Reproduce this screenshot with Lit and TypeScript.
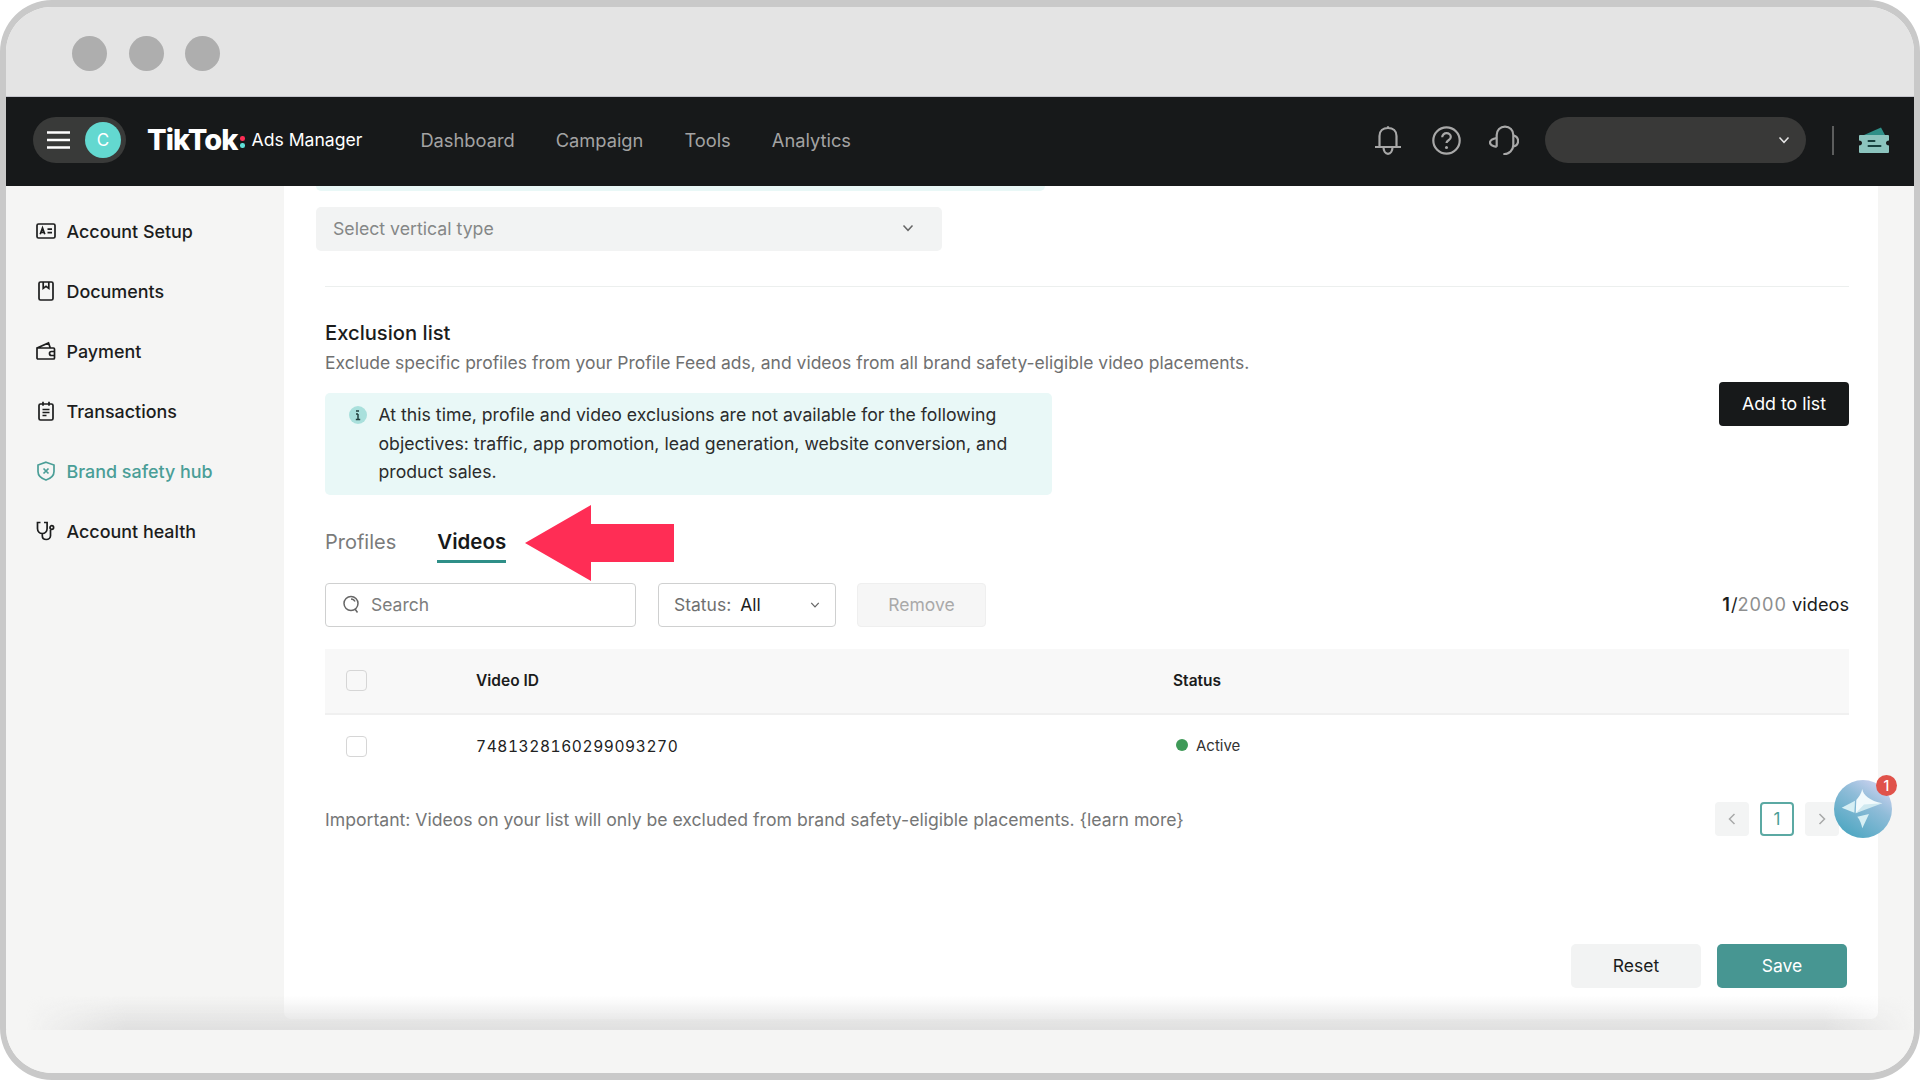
import { LitElement, html, css, svg } from "lit";
import { customElement } from "lit/decorators.js";

const sideItems = [
  { label: "Account Setup", icon: svg`<rect x="1" y="3" width="18" height="14" rx="1.5"/><path d="M4.2 13.2 6.5 7l2.3 6.2M5 11.4h3M11.5 8.2H16M11.5 11.6H16"/>` },
  { label: "Documents", icon: svg`<rect x="3" y="1" width="14" height="18" rx="1.5"/><path d="M7.2 1v6.4l2.8-2 2.8 2V1"/>` },
  { label: "Payment", icon: svg`<path d="M1 7h16.5a1 1 0 0 1 1 1v9a1 1 0 0 1-1 1H2a1 1 0 0 1-1-1V7Zm0 0 11.5-5 1.8 5M18.5 10.5h-3a2 2 0 0 0 0 4h3"/>` },
  { label: "Transactions", icon: svg`<rect x="3" y="3" width="14" height="16" rx="1.5"/><path d="M7 .8v4M13 .8v4M6.5 8.5h7M6.5 11.5h7M6.5 14.5h4"/>` },
  { label: "Brand safety hub", active: true, icon: svg`<path d="M10 1.2 18 4v6.500c0 4-3.400 7-8 8.500-4.600-1.500-8-4.500-8-8.500V4l8-2.800Z"/><path d="m7.500 7.500 5 5M12.500 7.500l-5 5"/>` },
  { label: "Account health", icon: svg`<path d="M4.500 1.500H1.500v6c0 3 2.200 5 4.800 5s4.800-2 4.800-5v-6H8M6.300 12.500v2.200c0 2.200 1.700 3.800 4 3.800s4.200-1.600 4.200-3.800V9"/><circle cx="15.800" cy="6.500" r="1.800"/>` },
];

const navLinks = ["Dashboard", "Campaign", "Tools", "Analytics"];

const chevron = html`<svg class="chev" viewBox="0 0 12 8"><path d="M1.500 1.500 6 6.300l4.500-4.800"/></svg>`;

@customElement("app-root")
export class AppRoot extends LitElement {
  static styles = css`
    :host {
      display: block;
      width: 1920px;
      height: 1080px;
      background: #fff;
      font-family: Inter, "Liberation Sans", sans-serif;
      color: #1b1c1c;
    }
    .frame {
      box-sizing: border-box;
      width: 1920px;
      height: 1080px;
      border: solid #c9c9c9;
      border-width: 7px 6px;
      border-radius: 52px;
      overflow: hidden;
      display: flex;
      flex-direction: column;
      background: #f5f5f4;
    }
    .chrome {
      box-sizing: border-box;
      height: 90px;
      flex: none;
      background: #e4e4e4;
      border-bottom: 1px solid #c5c5cc;
      display: flex;
      align-items: center;
      gap: 21.5px;
      padding: 5px 0 1px 66px;
    }
    .dot {
      width: 35px;
      height: 35px;
      border-radius: 50%;
      background: #aeaeae;
    }
    nav {
      box-sizing: border-box;
      height: 89px;
      flex: none;
      background: #17191a;
      display: flex;
      align-items: center;
      padding: 0 25px 3px 27px;
    }
    .menu {
      box-sizing: border-box;
      width: 93px;
      height: 46px;
      border-radius: 23px;
      background: #393a39;
      display: flex;
      align-items: center;
      padding-left: 14px;
      gap: 15px;
    }
    .burger {
      width: 23px;
      height: 18px;
      stroke: #fff;
      stroke-width: 2.6;
      fill: none;
    }
    .avatar {
      width: 36px;
      height: 36px;
      border-radius: 50%;
      background: #63d8d0;
      color: #fff;
      font-size: 17px;
      display: flex;
      align-items: center;
      justify-content: center;
    }
    .logo {
      margin: -2px 0 0 21px;
      display: flex;
      align-items: center;
      color: #fff;
    }
    .logo b {
      font-size: 29px;
      font-weight: 800;
      letter-spacing: -0.9px;
      line-height: 1;
    }
    .colon {
      display: flex;
      flex-direction: column;
      gap: 2px;
      margin: 5px 7px 0 2px;
    }
    .colon i {
      width: 5px;
      height: 5px;
      border-radius: 45%;
      background: #ff2d55;
    }
    .colon i:last-child {
      background: #5fe0d8;
    }
    .logo span {
      font-size: 17.6px;
      white-space: nowrap;
    }
    .links {
      display: flex;
      gap: 41px;
      margin-left: 58px;
      color: #a3a3a3;
      font-size: 18.3px;
    }
    .tools {
      margin-left: auto;
      display: flex;
      align-items: center;
    }
    .tools svg.line {
      fill: none;
      stroke: #a8a8a8;
      stroke-width: 2.2;
    }
    .bell {
      width: 28px;
      height: 30px;
    }
    .help {
      width: 29px;
      height: 29px;
      margin-left: 30px;
    }
    .tools svg .help-q {
      fill: #a8a8a8;
      stroke: none;
    }
    .head {
      width: 30px;
      height: 30px;
      margin-left: 28px;
    }
    .acct {
      box-sizing: border-box;
      width: 261px;
      height: 46px;
      border-radius: 23px;
      background: #393938;
      margin-left: 26px;
      display: flex;
      align-items: center;
      justify-content: flex-end;
      padding-right: 16px;
    }
    .acct .chev {
      stroke: #e5e5e5;
    }
    .sep {
      width: 2px;
      height: 29px;
      background: #5c5d5d;
      margin: 0 25px 0 26.5px;
    }
    .ticket {
      width: 30px;
      height: 26px;
    }
    .chev {
      width: 12px;
      height: 8px;
      fill: none;
      stroke: #666;
      stroke-width: 1.5;
    }
    .body {
      flex: 1;
      min-height: 0;
      display: flex;
      position: relative;
    }
    .side {
      width: 278px;
      flex: none;
      box-sizing: border-box;
      padding: 15px 0 0 30px;
    }
    .item {
      height: 60px;
      display: flex;
      align-items: center;
      gap: 10.5px;
      font-size: 17.9px;
      font-weight: 500;
      color: #1c1d1d;
    }
    .item svg {
      width: 20px;
      height: 20px;
      fill: none;
      stroke: currentColor;
      stroke-width: 1.7;
      flex: none;
    }
    .item.on {
      color: #4a9e97;
    }
    .card {
      position: relative;
      width: 1594px;
      flex: none;
      margin-bottom: 11px;
      box-sizing: border-box;
      background: #fff;
      border-radius: 0 0 7px 7px;
      padding: 0 29px 31px 41px;
      display: flex;
      flex-direction: column;
      font-size: 17.5px;
    }
    .strip {
      width: 729px;
      height: 5px;
      margin-left: -9px;
      background: #e9f8f7;
      border-radius: 0 0 5px 5px;
    }
    .vertical {
      box-sizing: border-box;
      width: 626px;
      height: 44px;
      margin: 16px 0 0 -9px;
      padding: 0 16px 2px 17px;
      border-radius: 5px;
      background: #f2f3f3;
      color: #858787;
      display: flex;
      align-items: center;
      justify-content: space-between;
      font-size: 17.7px;
    }
    .vertical .chev {
      margin-right: 12px;
    }
    .rule {
      height: 1px;
      background: #ecefee;
      margin-top: 35px;
    }
    .head-row {
      display: flex;
      justify-content: space-between;
      margin-top: 33px;
    }
    h2 {
      margin: 0;
      font-size: 20.2px;
      line-height: 26px;
      font-weight: 500;
      color: #1b1c1c;
    }
    .desc {
      margin-top: 4px;
      line-height: 26px;
      color: #6f7070;
    }
    .info {
      box-sizing: border-box;
      width: 727px;
      margin-top: 17px;
      padding: 8px 20px 8px 24px;
      border-radius: 5px;
      background: #e9f8f7;
      display: flex;
      gap: 11.5px;
      font-size: 17.67px;
      line-height: 28.5px;
      color: #2b2c2c;
    }
    .info svg {
      width: 18px;
      height: 18px;
      flex: none;
      margin: 5px 0 0 0;
    }
    .add {
      box-sizing: border-box;
      width: 130px;
      height: 44px;
      margin-top: 62px;
      padding-bottom: 2px;
      border-radius: 4px;
      background: #17191a;
      color: #fff;
      font-size: 17.8px;
      display: flex;
      align-items: center;
      justify-content: center;
    }
    .tabs {
      display: flex;
      gap: 41px;
      margin-top: 33px;
      font-size: 20px;
      line-height: 28px;
      color: #7a7b7b;
    }
    .tabs div {
      padding-bottom: 7px;
    }
    .tabs .on {
      font-size: 20.5px;
      font-weight: 600;
      color: #17191a;
      border-bottom: 3px solid #2f8f88;
      padding-bottom: 4px;
    }
    .filters {
      display: flex;
      align-items: center;
      height: 44px;
      margin-top: 20px;
    }
    .field {
      box-sizing: border-box;
      height: 44px;
      border: 1.5px solid #cfd0d0;
      border-radius: 4px;
      display: flex;
      align-items: center;
    }
    .search {
      width: 311px;
      padding-left: 16px;
      gap: 10px;
      color: #7c7d7d;
    }
    .search svg {
      width: 19px;
      height: 19px;
      fill: none;
      stroke: #666;
      stroke-width: 1.5;
    }
    .status {
      width: 178px;
      margin-left: 22px;
      padding: 0 15px;
      color: #6f7070;
    }
    .status b {
      font-weight: 400;
      color: #1b1c1c;
      margin-left: 9px;
    }
    .status .chev {
      margin-left: auto;
      width: 10px;
    }
    .remove {
      width: 129px;
      height: 44px;
      box-sizing: border-box;
      margin-left: 21px;
      border: 1px solid #efefef;
      border-radius: 4px;
      background: #f6f6f6;
      color: #a9a9a9;
      display: flex;
      align-items: center;
      justify-content: center;
    }
    .count {
      margin: -2px 0 0 auto;
      font-size: 18.2px;
      color: #1b1c1c;
    }
    .count b {
      font-weight: 600;
      letter-spacing: 1px;
    }
    .count span {
      color: #8e8f8f;
      letter-spacing: 1px;
    }
    .row {
      display: grid;
      grid-template-columns: 151px 697px 1fr;
      align-items: center;
      height: 64px;
    }
    .row.top {
      margin-top: 22px;
      background: #f8f8f8;
      border-bottom: 2px solid #f0f0f0;
      font-size: 15.5px;
      font-weight: 600;
    }
    .box {
      box-sizing: border-box;
      width: 21px;
      height: 21px;
      margin-left: 21px;
      border: 1.5px solid #d6d6d6;
      border-radius: 4px;
      background: #fff;
    }
    .top .box {
      background: #f8f8f8;
    }
    .vid {
      font-size: 15.5px;
      font-variant-numeric: tabular-nums;
      letter-spacing: 0.6px;
      color: #222;
    }
    .active {
      display: flex;
      align-items: center;
      gap: 8px;
      margin: -3px 0 0 3px;
      font-size: 15px;
      color: #333;
    }
    .active i {
      width: 12px;
      height: 12px;
      border-radius: 50%;
      background: #3f9a58;
    }
    .note {
      display: flex;
      justify-content: space-between;
      align-items: center;
      height: 34px;
      margin-top: 23px;
      font-size: 17.63px;
      color: #757676;
    }
    .note > span {
      padding-top: 1px;
    }
    .pager {
      display: flex;
      gap: 11px;
      margin-right: 10px;
    }
    .pager div {
      box-sizing: border-box;
      width: 34px;
      height: 34px;
      border-radius: 4px;
      background: #f3f4f4;
      display: flex;
      align-items: center;
      justify-content: center;
      color: #4a9e97;
      font-size: 17px;
    }
    .pager svg {
      width: 8px;
      height: 12px;
      fill: none;
      stroke: #a8a9a9;
      stroke-width: 1.5;
    }
    .pager .cur {
      background: #fff;
      border: 2px solid #5ba9a3;
    }
    .actions {
      margin-top: auto;
      display: flex;
      justify-content: flex-end;
      gap: 16px;
      padding-right: 2px;
    }
    .actions div {
      box-sizing: border-box;
      width: 130px;
      height: 44px;
      padding-bottom: 2px;
      border-radius: 5px;
      background: #f2f3f3;
      display: flex;
      align-items: center;
      justify-content: center;
    }
    .actions .save {
      background: #479692;
      color: #fff;
    }
    .arrow {
      position: absolute;
      left: 241px;
      top: 319px;
      width: 149px;
      height: 76px;
      fill: #ff2d55;
    }
    .fab {
      position: absolute;
      left: 1550px;
      top: 594px;
      width: 58px;
      height: 58px;
    }
    .badge {
      position: absolute;
      left: 42px;
      top: -5px;
      width: 21px;
      height: 21px;
      border-radius: 50%;
      background: #e0524a;
      color: #fff;
      font-size: 14px;
      font-weight: 500;
      display: flex;
      align-items: center;
      justify-content: center;
    }
    .fade {
      position: absolute;
      left: 20px;
      right: 0;
      bottom: 0;
      height: 34px;
      pointer-events: none;
      background: linear-gradient(rgba(222, 222, 222, 0), rgba(222, 222, 222, 0.95));
      -webkit-mask-image: linear-gradient(90deg, transparent, #000 100px, #000 calc(100% - 90px), transparent);
      mask-image: linear-gradient(90deg, transparent, #000 100px, #000 calc(100% - 90px), transparent);
    }
    footer {
      height: 43px;
      flex: none;
      background: #f5f5f4;
    }
  `;

  render() {
    return html`
      <div class="frame">
        <div class="chrome">
          <div class="dot"></div>
          <div class="dot"></div>
          <div class="dot"></div>
        </div>
        <nav>
          <div class="menu">
            <svg class="burger" viewBox="0 0 23 18"><path d="M0 1.5h23M0 9h23M0 16.5h23" /></svg>
            <div class="avatar">C</div>
          </div>
          <div class="logo">
            <b>TikTok</b>
            <div class="colon"><i></i><i></i></div>
            <span>Ads Manager</span>
          </div>
          <div class="links">${navLinks.map((l) => html`<div>${l}</div>`)}</div>
          <div class="tools">
            <svg class="line bell" viewBox="0 0 28 30">
              <path d="M14 1.2V3M5.5 22V11C5.5 5.8 9 3 14 3s8.5 2.8 8.5 8v11M1 22h26M9.5 22c0 4.2 2 6.8 4.5 6.800s4.500-2.600 4.500-6.800" />
            </svg>
            <svg class="line help" viewBox="0 0 29 29">
              <circle cx="14.5" cy="14.5" r="13.2" />
              <path d="M10.2 11.3c0-2.5 2-4.100 4.300-4.100 2.500 0 4.300 1.700 4.300 3.800 0 3.300-4.300 3.200-4.300 6.100" />
              <circle class="help-q" cx="14.5" cy="21.5" r="1.5" />
            </svg>
            <svg class="line head" viewBox="0 0 30 30">
              <path d="M7.7 21.7V10c0-5 3.500-8.300 8.300-8.300S24.300 5 24.300 10v10c0 5-4 9.300-10 9.300" />
              <path d="M7.7 13c-4 .8-6.700 2.300-6.700 4.500s2.700 3.700 6.700 4.300M24.800 10.500c3 1 4.300 3.500 4.300 5.500s-1.300 4.500-4.300 5.500" />
            </svg>
            <div class="acct">${chevron}</div>
            <div class="sep"></div>
            <svg class="ticket" viewBox="0 0 30 26">
              <path d="M5 8 22 .5 26 8Z" fill="#2f8f88" />
              <path d="M1 8h28a1 1 0 0 1 1 1v4.500c-2 .2-3 1-3 2.500s1 2.300 3 2.500V25a1 1 0 0 1-1 1H1a1 1 0 0 1-1-1v-6.500c2-.2 3-1 3-2.500s-1-2.300-3-2.500V9a1 1 0 0 1 1-1Z" fill="#8cc4be" />
              <path d="M9.500 14h6M9.500 19h12" stroke="#17413f" stroke-width="2" stroke-linecap="round" />
            </svg>
          </div>
        </nav>
        <div class="body">
          <div class="side">
            ${sideItems.map(
              (it) => html`<div class="item ${it.active ? "on" : ""}">
                <svg viewBox="0 0 20 20">${it.icon}</svg>${it.label}
              </div>`
            )}
          </div>
          <div class="card">
            <div class="strip"></div>
            <div class="vertical">Select vertical type ${chevron}</div>
            <div class="rule"></div>
            <div class="head-row">
              <div>
                <h2>Exclusion list</h2>
                <div class="desc">Exclude specific profiles from your Profile Feed ads, and videos from all brand safety-eligible video placements.</div>
                <div class="info">
                  <svg viewBox="0 0 18 18">
                    <circle cx="9" cy="9" r="9" fill="#a9e0dc" />
                    <path d="M7 5h3M9 8v5.500M7 8h2M6.800 13.500h4.400" stroke="#22403e" stroke-width="1.500" fill="none" />
                  </svg>
                  <div>At this time, profile and video exclusions are not available for the following objectives: traffic, app promotion, lead generation, website conversion, and product sales.</div>
                </div>
              </div>
              <div class="add">Add to list</div>
            </div>
            <div class="tabs">
              <div>Profiles</div>
              <div class="on">Videos</div>
            </div>
            <div class="filters">
              <div class="field search">
                <svg viewBox="0 0 19 19"><circle cx="9" cy="8.500" r="7" /><path d="m13 14 2.500 3.500M9 4a4.500 4.500 0 0 1 4 2.500" /></svg>
                Search
              </div>
              <div class="field status">Status: <b>All</b> ${chevron}</div>
              <div class="remove">Remove</div>
              <div class="count"><b>1</b>/<span>2000</span> videos</div>
            </div>
            <div class="row top">
              <div class="box"></div>
              <div>Video ID</div>
              <div>Status</div>
            </div>
            <div class="row">
              <div class="box"></div>
              <div class="vid">7481328160299093270</div>
              <div class="active"><i></i>Active</div>
            </div>
            <div class="note">
              <span>Important: Videos on your list will only be excluded from brand safety-eligible placements. {learn more}</span>
              <div class="pager">
                <div><svg viewBox="0 0 8 12"><path d="M6.500 1 1.500 6l5 5" /></svg></div>
                <div class="cur">1</div>
                <div><svg viewBox="0 0 8 12"><path d="m1.500 1 5 5-5 5" /></svg></div>
              </div>
            </div>
            <div class="actions">
              <div>Reset</div>
              <div class="save">Save</div>
            </div>
            <svg class="arrow" viewBox="0 0 149 76"><path d="M0 38 66 0v19h83v38H66v19Z" /></svg>
            <div class="fab">
              <svg viewBox="0 0 58 58">
                <defs>
                  <linearGradient id="fabg" x1="0.2" y1="1" x2="0.85" y2="0">
                    <stop offset="0" stop-color="#49a5c0" />
                    <stop offset="0.6" stop-color="#8fbcd8" />
                    <stop offset="1" stop-color="#d5d5f3" />
                  </linearGradient>
                </defs>
                <circle cx="29" cy="29" r="29" fill="url(#fabg)" />
                <path d="M7.700 27.700 21 20.700l-.6 12Z" fill="#d6eff4" />
                <path d="M28.300 9C29 15 36 21 48.300 23.300 38 25 29 29 21.700 33.300L22.300 20C25 17 27.500 13 28.300 9Z" fill="#f2fafc" />
                <path d="M48.300 23.300 21.700 33.300 30 24.500Z" fill="#cfe9f0" />
                <path d="M23.300 36.700 35 34 28.300 48.300C27.500 44 26 40 23.300 36.700Z" fill="#d6eff4" />
              </svg>
              <div class="badge">1</div>
            </div>
          </div>
          <div class="fade"></div>
        </div>
        <footer></footer>
      </div>
    `;
  }
}
